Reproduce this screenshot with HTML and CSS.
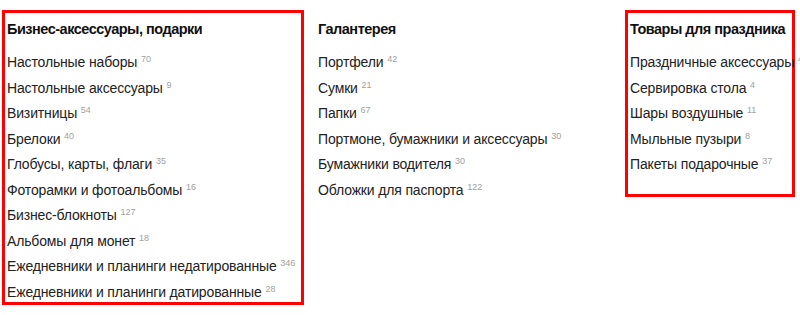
FILE: index.html
```html
<!DOCTYPE html>
<html lang="ru">
<head>
    <meta charset="UTF-8">
    <meta name="viewport" content="width=device-width, initial-scale=1.0">
    <title>Каталог</title>
    <link rel="stylesheet" href="styles.css">
</head>
<body>
    <div class="catalog">
        <!-- Бизнес-аксессуары -->
        <div class="cat-col marked">
            <h3 class="cat-title">Бизнес-аксессуары, подарки</h3>
            <ul class="cat-list">
                <li><a href="#">Настольные наборы</a> <sup>70</sup></li>
                <li><a href="#">Настольные аксессуары</a> <sup>9</sup></li>
                <li><a href="#">Визитницы</a> <sup>54</sup></li>
                <li><a href="#">Брелоки</a> <sup>40</sup></li>
                <li><a href="#">Глобусы, карты, флаги</a> <sup>35</sup></li>
                <li><a href="#">Фоторамки и фотоальбомы</a> <sup>16</sup></li>
                <li><a href="#">Бизнес-блокноты</a> <sup>127</sup></li>
                <li><a href="#">Альбомы для монет</a> <sup>18</sup></li>
                <li><a href="#">Ежедневники и планинги недатированные</a> <sup>346</sup></li>
                <li><a href="#">Ежедневники и планинги датированные</a> <sup>28</sup></li>
            </ul>
        </div>

        <!-- Галантерея -->
        <div class="cat-col">
            <h3 class="cat-title">Галантерея</h3>
            <ul class="cat-list">
                <li><a href="#">Портфели</a> <sup>42</sup></li>
                <li><a href="#">Сумки</a> <sup>21</sup></li>
                <li><a href="#">Папки</a> <sup>67</sup></li>
                <li><a href="#">Портмоне, бумажники и аксессуары</a> <sup>30</sup></li>
                <li><a href="#">Бумажники водителя</a> <sup>30</sup></li>
                <li><a href="#">Обложки для паспорта</a> <sup>122</sup></li>
            </ul>
        </div>

        <!-- Товары для праздника -->
        <div class="cat-col marked narrow">
            <h3 class="cat-title">Товары для праздника</h3>
            <ul class="cat-list">
                <li><a href="#">Праздничные аксессуары</a> <sup>4</sup></li>
                <li><a href="#">Сервировка стола</a> <sup>4</sup></li>
                <li><a href="#">Шары воздушные</a> <sup>11</sup></li>
                <li><a href="#">Мыльные пузыри</a> <sup>8</sup></li>
                <li><a href="#">Пакеты подарочные</a> <sup>37</sup></li>
            </ul>
        </div>
    </div>
</body>
</html>
```

FILE: styles.css
```css
body {
    margin: 0;
    padding: 0;
    background-color: #ffffff;
    color: #222222;
    font-family: "Liberation Sans", Arial, sans-serif;
}

.catalog {
    display: flex;
    align-items: flex-start;
    gap: 9px;
    padding: 10px 0 0 2px;
}

.cat-col {
    box-sizing: border-box;
    width: 303px;
    padding: 6px 2px 0 2px;
    border: 3px solid transparent;
    white-space: nowrap;
}

.cat-col:first-child {
    width: 302px;
}

.cat-col.marked {
    border-color: #ff0000;
}

.cat-col.narrow {
    width: 170px;
    padding-bottom: 20px;
}

.cat-title {
    margin: 0 0 14px 0;
    font-size: 14.5px;
    line-height: 20px;
    font-weight: bold;
    letter-spacing: -0.5px;
    color: #111111;
}

.cat-list {
    list-style: none;
    margin: 0;
    padding: 0;
}

.cat-list li {
    font-size: 14px;
    line-height: 19px;
    margin-bottom: 6.5px;
    letter-spacing: -0.15px;
}

.cat-list li:last-child {
    margin-bottom: 0;
}

.cat-list a {
    color: #222222;
    text-decoration: none;
}

.cat-list sup {
    font-size: 9px;
    color: #a0a0a0;
    vertical-align: 5px;
    line-height: 0;
    letter-spacing: 0;
}
```
